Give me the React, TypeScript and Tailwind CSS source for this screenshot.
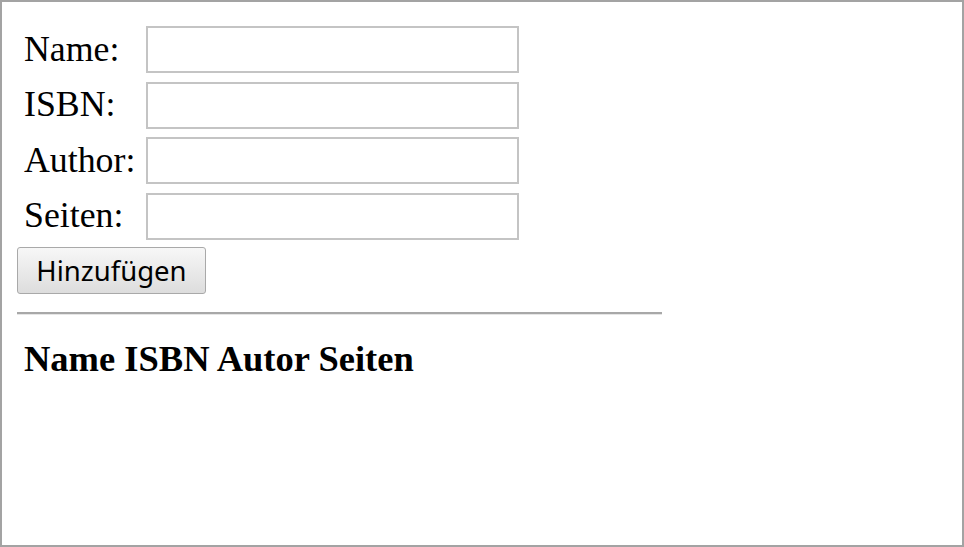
import { FC } from "react";

const fields = ["Name:", "ISBN:", "Author:", "Seiten:"];

const App: FC = () => {
  return (
    <div className="w-[964px] h-[547px] bg-white border-2 border-[#a3a3a3] font-['Liberation_Serif',serif] text-black">
      <div className="pl-[15px] pt-[24px]">
        {/* Formular */}
        <div className="flex flex-col gap-[8px] pl-[7px]">
          {fields.map((label) => (
            <div key={label} className="flex items-center h-[47.5px]">
              <span className="w-[122px] text-[35.8px] leading-none">{label}</span>
              <input
                type="text"
                className="w-[373px] h-[47px] border-2 border-[#c4c4c4] bg-white outline-none"
              />
            </div>
          ))}
        </div>

        <button className="mt-[7px] w-[189px] h-[47px] border border-[#a9a9a9] rounded-[3px] bg-gradient-to-b from-[#f7f7f7] to-[#dddddd] font-['Noto_Sans',sans-serif] text-[27.5px] leading-none text-black">
          Hinzufügen
        </button>

        <div className="mt-[18px] w-[645px] h-[3px] border-t-2 border-[#a8a8a8] border-b border-b-[#e6e6e6]" />

        <h3 className="mt-[26px] pl-[7px] text-[36.5px] font-bold leading-none">
          Name ISBN Autor Seiten
        </h3>
      </div>
    </div>
  );
};

export default App;
